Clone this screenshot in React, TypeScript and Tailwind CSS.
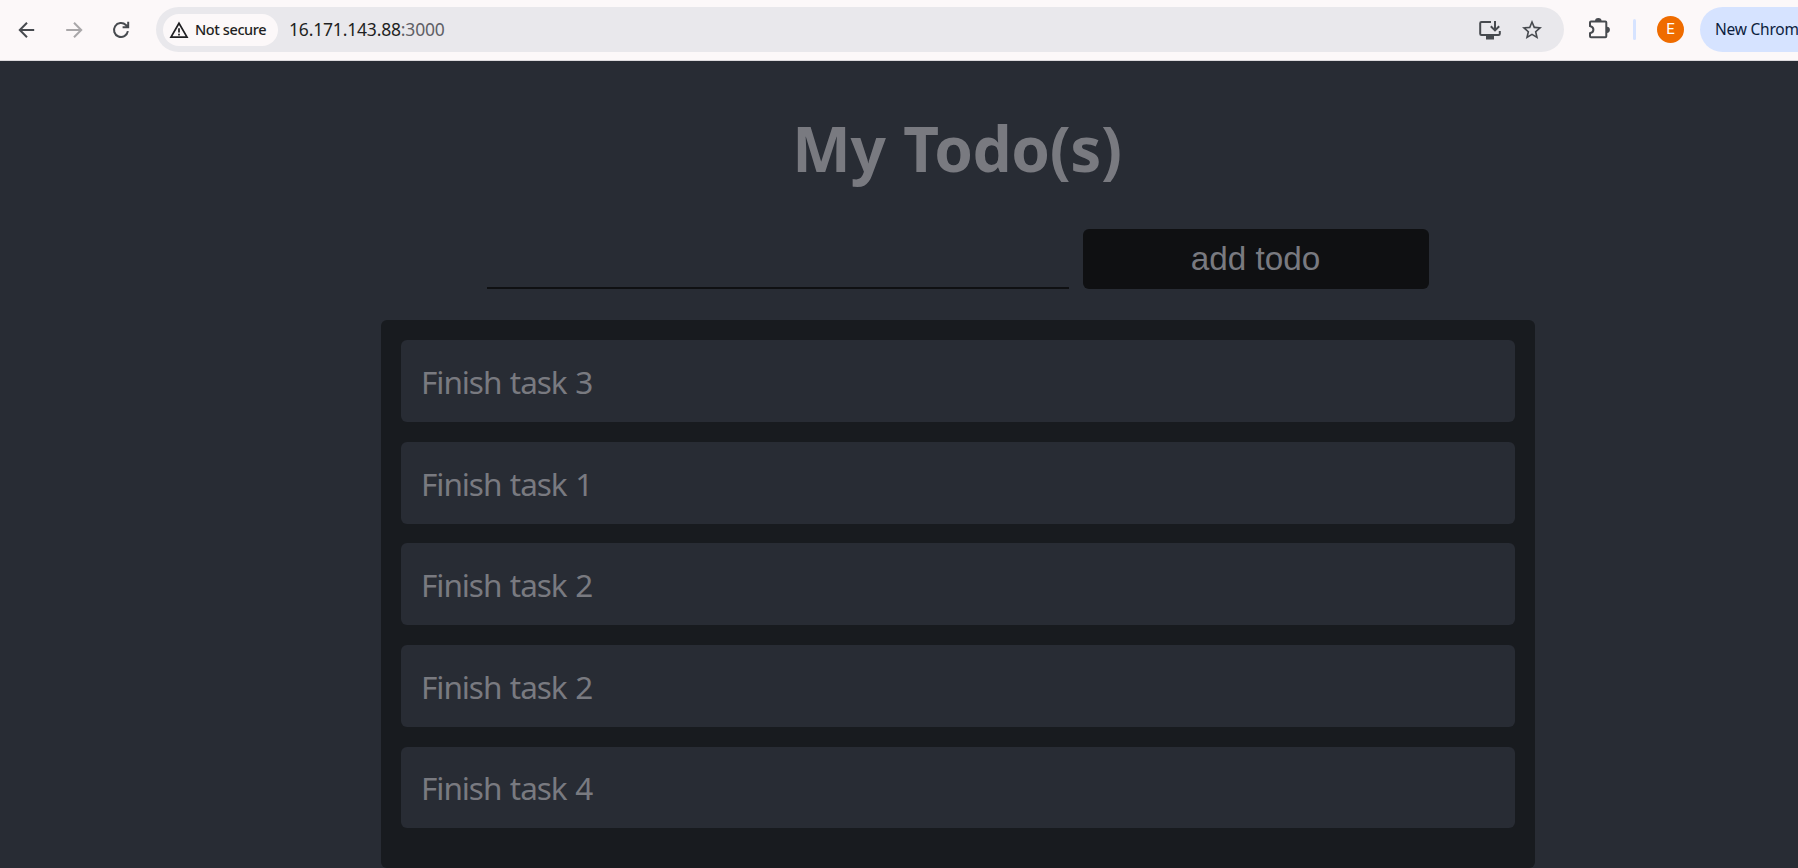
import React from "react";

const todos = ["Finish task 3", "Finish task 1", "Finish task 2", "Finish task 2", "Finish task 4"];

const stroke = { fill: "none", stroke: "currentColor", strokeWidth: 2 };

function BrowserBar() {
  return (
    <header className="flex h-[61px] shrink-0 items-start border-b border-[#dcdadd] bg-[#fcf8f9] pt-[7px] text-[#474a4f]">
      <div className="flex h-[45px] w-[156px] shrink-0 items-center pl-[17px]">
        <svg className="h-5 w-5 shrink-0" viewBox="0 0 20 20" {...stroke}>
          <path d="M17.2 10H3M10 2.8 2.8 10l7.2 7.2" />
        </svg>
        <svg className="ml-7 h-5 w-5 shrink-0 text-[#a9a7a9]" viewBox="0 0 20 20" {...stroke}>
          <path d="M1.2 10h14.7M9 2.8l7.2 7.2L9 17.2" />
        </svg>
        <svg className="ml-[26px] h-5 w-5 shrink-0" viewBox="0 0 20 20" {...stroke}>
          <path d="M16.9 11.2a7 7 0 1 1-2-6.2l1.8 1.8M17.2 1.8v5.4h-5.6" />
        </svg>
      </div>
      <div className="flex h-[45px] w-[1408px] shrink-0 items-center rounded-full bg-[#e9e8ec] pl-[7px]">
        <div className="flex h-8 w-[115px] items-center rounded-full bg-[#fcf8f9] pl-[6px] text-[#1f1f22]">
          <svg className="h-[18px] w-[20px]" viewBox="0 0 20 18" fill="none" stroke="currentColor" strokeWidth="1.7">
            <path d="M10 2.3 2 16.1h16Z" />
            <path d="M10 7.2v4.3M10 12.7v1.8" />
          </svg>
          <span className="ml-[6px] whitespace-nowrap font-['Noto_Sans'] text-[14.5px] font-medium tracking-[-0.4px]">Not secure</span>
        </div>
        <div className="ml-[11px] whitespace-nowrap font-['Noto_Sans'] text-[17.5px] tracking-[-0.18px] text-[#1f1f22]">
          16.171.143.88<span className="text-[#5f6066]">:3000</span>
        </div>
        <svg className="ml-auto h-[20px] w-[22px]" viewBox="0 0 22 20" {...stroke}>
          <path d="M12 2H2.5Q1.2 2 1.2 3.3v10.4Q1.2 15 2.5 15h17q1.3 0 1.3-1.3V11" />
          <path d="M16 1v9M11.8 6.2 16 10.4l4.2-4.2" />
          <path d="M7 15.5h8v4h-8z" fill="currentColor" stroke="none" />
        </svg>
        <svg className="ml-[19px] mr-[20px] h-6 w-6" viewBox="0 0 24 24" fill="currentColor">
          <path d="M22 9.24l-7.19-.62L12 2 9.19 8.63 2 9.24l5.46 4.73L5.82 21 12 17.27 18.18 21l-1.63-7.03L22 9.24zM12 15.4l-3.76 2.27 1-4.28-3.32-2.88 4.38-.38L12 6.1l1.71 4.04 4.38.38-3.32 2.88 1 4.28L12 15.4z" />
        </svg>
      </div>
      <div className="flex h-[45px] w-[136px] shrink-0 items-center pl-[24px]">
        <svg className="h-6 w-[23px] shrink-0" viewBox="0 0 23 24" {...stroke}>
          <path d="M3 3.6h14.3q1 0 1 1v13.7q0 1-1 1H3q-1 0-1-1v-3q3.4-.9 3.4-3.6T2 8V4.6q0-1 1-1Z" />
          <path d="M7 3.4a3.3 3.3 0 0 1 6.6 0ZM18.8 8.7a3.1 3.1 0 0 1 0 6.2Z" fill="currentColor" stroke="none" />
        </svg>
        <div className="ml-[22px] h-[21px] w-[3px] rounded-full bg-[#d6e3ff]" />
        <div className="ml-[21px] flex h-[27px] w-[27px] items-center justify-center rounded-full bg-[#ef6c00] font-[Roboto] text-[15px] text-white">E</div>
      </div>
      <div className="flex h-[45px] min-w-0 flex-1 items-center overflow-hidden rounded-l-full bg-[#d6e3ff] pl-[15px]">
        <span className="whitespace-nowrap font-['Noto_Sans'] text-[15.5px] tracking-[-0.22px] text-[#0c1d3d]">New Chrom</span>
      </div>
    </header>
  );
}

export default function App() {
  return (
    <div className="flex h-[868px] w-[1798px] flex-col overflow-hidden bg-[#282c34] font-['Noto_Sans',sans-serif] text-[#797a80]">
      <BrowserBar />
      <main className="ml-[381px] flex w-[1154px] flex-col items-center">
        <h1 className="mt-[43px] h-[88px] whitespace-nowrap pr-[2px] text-[62px] font-bold leading-[88px] tracking-[-0.4px] [word-spacing:2px]">My Todo(s)</h1>
        <form className="mt-[37px] flex h-[60px] gap-[14px]" onSubmit={(e) => e.preventDefault()}>
          <input className="h-[60px] w-[582px] border-b-2 border-[#0f1012] bg-transparent text-[32px] outline-none" />
          <button className="h-[60px] w-[346px] rounded-[6px] bg-[#0f1012] pb-px pr-px font-['Liberation_Sans'] text-[33.3px]">add todo</button>
        </form>
        <ul className="mt-[31px] flex h-[548px] w-full flex-col gap-[19.67px] rounded-[6px] bg-[#181b1f] p-5">
          {todos.map((todo, i) => (
            <li key={i} className="flex h-[82px] shrink-0 items-center rounded-[6px] bg-[#282c34] pl-5 pt-px text-[31.5px] tracking-[-1.05px] [word-spacing:1.4px] last:h-[81px]">
              {todo}
            </li>
          ))}
        </ul>
      </main>
    </div>
  );
}
